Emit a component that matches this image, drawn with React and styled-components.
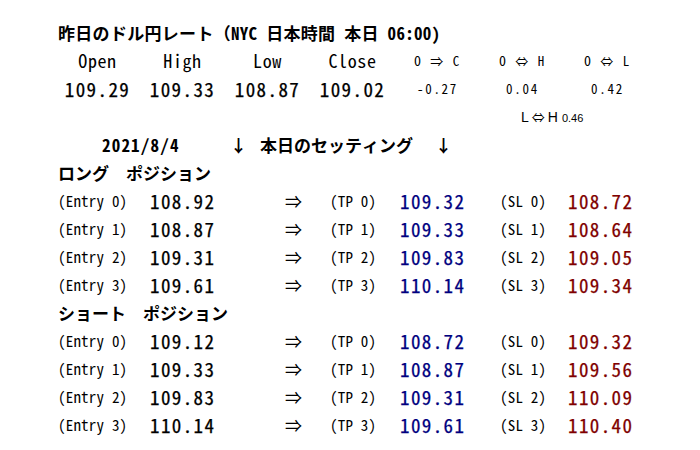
import React from 'react';
import styled, { createGlobalStyle } from 'styled-components';

const GlobalStyle = createGlobalStyle`
  html, body {
    margin: 0;
    padding: 0;
    background: #ffffff;
  }
  body {
    font-family: 'Noto Sans Mono CJK JP', 'Noto Sans CJK JP', 'DejaVu Sans Mono', monospace;
    color: #000000;
  }
`;

const MONO = `'Noto Sans Mono CJK JP', 'Noto Sans CJK JP', 'DejaVu Sans Mono', monospace`;

const Page = styled.div`
  width: 700px;
  height: 450px;
  box-sizing: border-box;
  padding: 18px 0 0 55px;
  overflow: hidden;
`;

const Line = styled.div`
  height: 28px;
  display: flex;
  align-items: center;
`;

const Title = styled(Line)`
  padding-left: 3px;
  font-family: ${MONO};
  font-size: 17px;
  font-weight: 700;
  letter-spacing: 0.3px;
  white-space: pre;
`;

const Summary = styled.div`
  display: grid;
  grid-template-columns: repeat(7, 85px);
  grid-auto-rows: 28px;
  align-items: center;
  justify-items: center;
`;

const HeadCell = styled.div`
  font-family: ${MONO};
  font-size: 18px;
  letter-spacing: 0.6px;
`;

const DiffHead = styled.div`
  font-family: ${MONO};
  font-size: 13px;
  letter-spacing: 1.5px;
  white-space: pre;
`;

const Price = styled.div`
  font-family: ${MONO};
  font-size: 19px;
  letter-spacing: 1.4px;
  -webkit-text-stroke: 0.25px currentColor;
  color: ${(p) => p.$color || '#000000'};
`;

const DiffValue = styled.div`
  font-family: ${MONO};
  font-size: 13px;
  letter-spacing: 1.7px;
`;

const Note = styled.div`
  grid-column: 6 / span 2;
  justify-self: start;
  padding-left: 41px;
  font-family: 'Liberation Sans', Arial, sans-serif;
  font-size: 14px;
  display: flex;
  align-items: baseline;

  small {
    font-size: 11px;
    margin-left: 4px;
  }
`;

const NoteArrow = styled.span`
  font-family: 'Noto Sans CJK JP', sans-serif;
  font-size: 13px;
  margin: 0 3px;
`;

const DateRow = styled(Line)`
  display: grid;
  grid-template-columns: 128px 30px 175px auto;
  padding-left: 47px;
  font-family: ${MONO};
  font-size: 17px;
  font-weight: 700;
`;

const DateText = styled.span`
  letter-spacing: 1.2px;
`;

const SectionTitle = styled(Line)`
  padding-left: 3px;
  font-family: ${MONO};
  font-size: 17px;
  font-weight: 700;
  white-space: pre;
`;

const PosRow = styled.div`
  height: 28px;
  display: grid;
  grid-template-columns: 92px 137px 43px 70px 100px 68px 80px;
  align-items: center;
  padding-left: 3px;
`;

const Tag = styled.div`
  font-family: ${MONO};
  font-size: 15px;
  letter-spacing: 0.2px;
  white-space: pre;
`;

const Arrow = styled.div`
  font-family: 'Noto Sans CJK JP', sans-serif;
  font-size: 17px;
  margin-left: -2px;
`;

const summary = [
  { head: 'Open', value: '109.29' },
  { head: 'High', value: '109.33' },
  { head: 'Low', value: '108.87' },
  { head: 'Close', value: '109.02' },
];

const diffs = [
  { head: 'O ⇒ C', value: '-0.27' },
  { head: 'O ⇔ H', value: '0.04' },
  { head: 'O ⇔ L', value: '0.42' },
];

const longRows = [
  ['108.92', '109.32', '108.72'],
  ['108.87', '109.33', '108.64'],
  ['109.31', '109.83', '109.05'],
  ['109.61', '110.14', '109.34'],
];

const shortRows = [
  ['109.12', '108.72', '109.32'],
  ['109.33', '108.87', '109.56'],
  ['109.83', '109.31', '110.09'],
  ['110.14', '109.61', '110.40'],
];

const Position = ({ title, rows }) => (
  <>
    <SectionTitle>{title}</SectionTitle>
    {rows.map(([entry, tp, sl], i) => (
      <PosRow key={i}>
        <Tag>(Entry {i})</Tag>
        <Price>{entry}</Price>
        <Arrow>⇒</Arrow>
        <Tag>(TP {i})</Tag>
        <Price $color='#000080'>{tp}</Price>
        <Tag>(SL {i})</Tag>
        <Price $color='#800000'>{sl}</Price>
      </PosRow>
    ))}
  </>
);

const App = () => (
  <>
    <GlobalStyle />
    <Page>
      <Title>昨日のドル円レート（NYC 日本時間 本日 06:00)</Title>
      <Summary>
        {summary.map((s) => <HeadCell key={s.head}>{s.head}</HeadCell>)}
        {diffs.map((d) => <DiffHead key={d.head}>{d.head}</DiffHead>)}
        {summary.map((s) => <Price key={s.head}>{s.value}</Price>)}
        {diffs.map((d) => <DiffValue key={d.head}>{d.value}</DiffValue>)}
        <Note>L<NoteArrow>⇔</NoteArrow>H<small>0.46</small></Note>
      </Summary>
      <DateRow>
        <DateText>2021/8/4</DateText>
        <span>↓</span>
        <span>本日のセッティング</span>
        <span>↓</span>
      </DateRow>
      <Position title='ロング　ポジション' rows={longRows} />
      <Position title='ショート　ポジション' rows={shortRows} />
    </Page>
  </>
);

export default App;
